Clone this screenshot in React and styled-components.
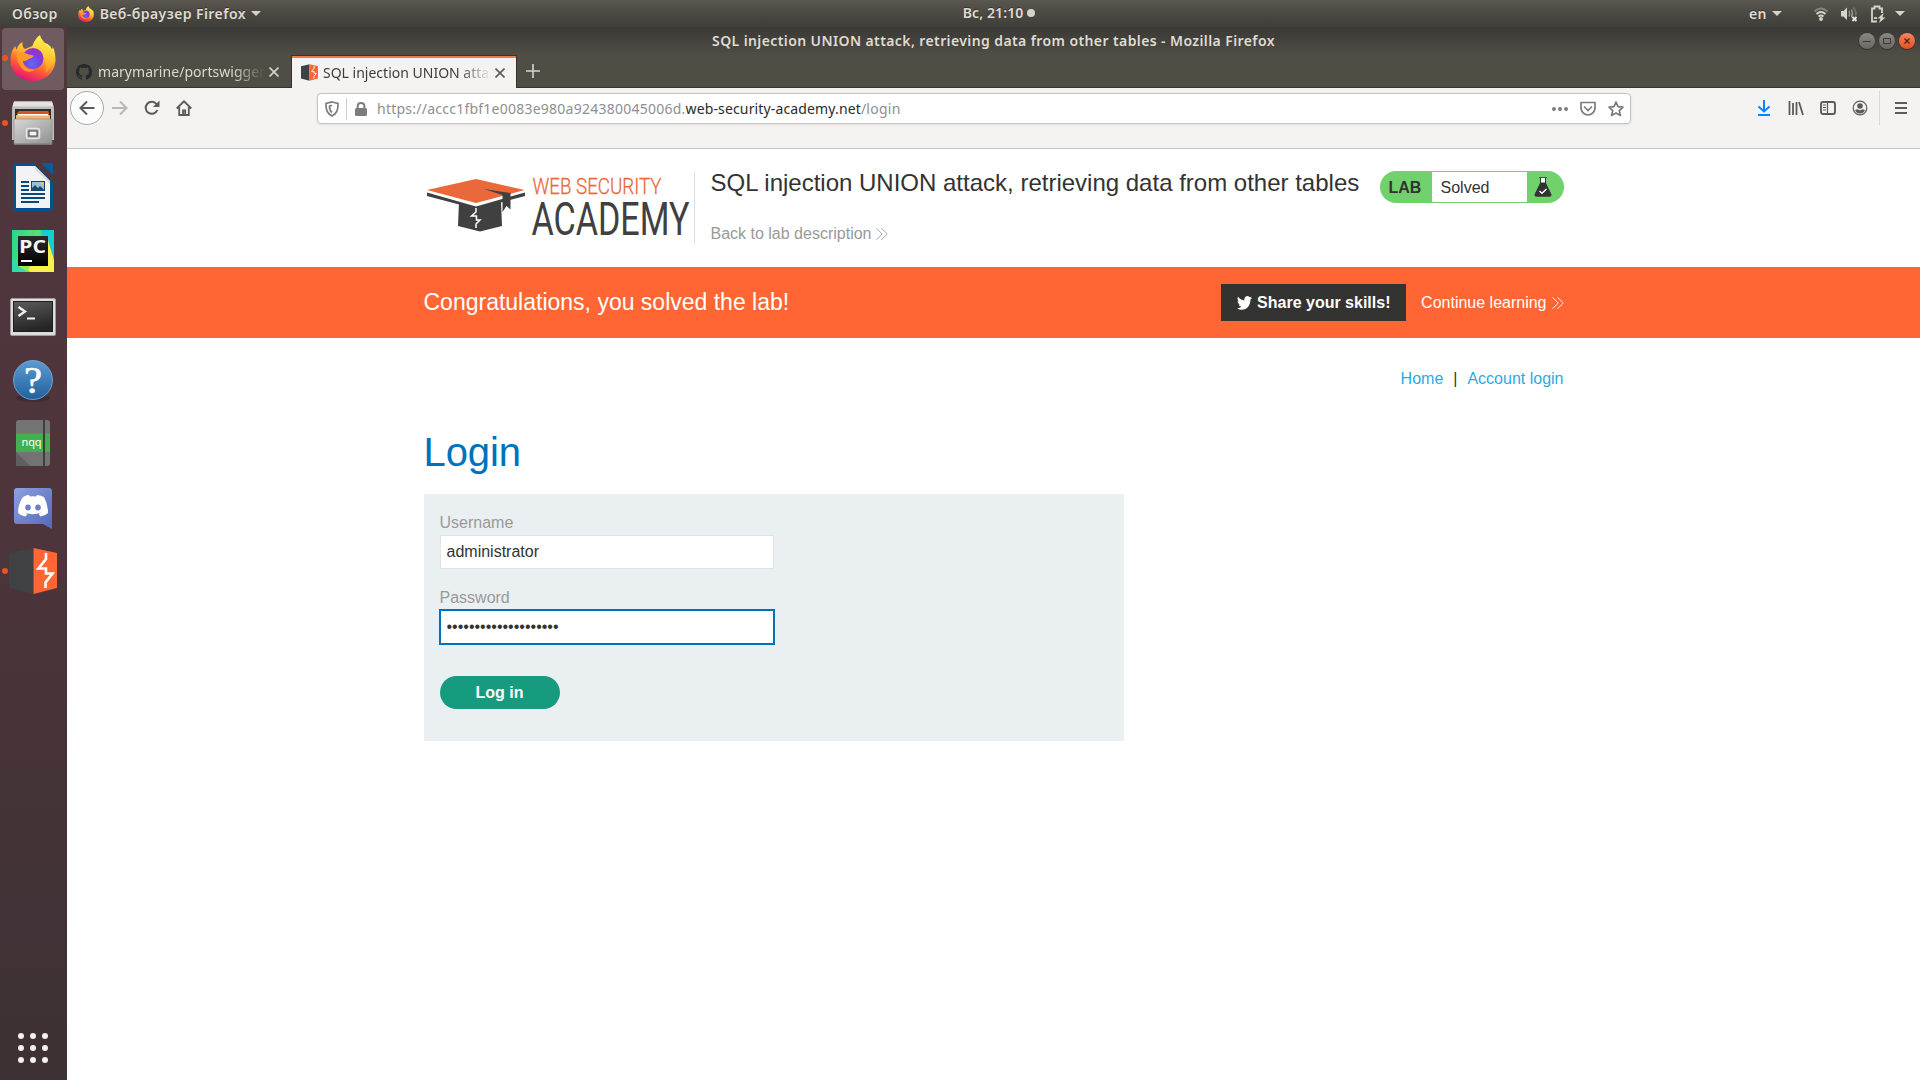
import React from "react";
import styled, { createGlobalStyle, css } from "styled-components";

const Global = createGlobalStyle`
  *, *::before, *::after { box-sizing: border-box; }
  html, body { margin: 0; padding: 0; overflow: hidden; }
  svg { display: block; flex: none; }
`;

const ui = css`font-family: "Noto Sans", "Open Sans", sans-serif;`;
const web = css`font-family: "Liberation Sans", Arial, sans-serif;`;

const Desktop = styled.div`
  display: flex;
  flex-direction: column;
  width: 1920px;
  height: 1080px;
  background: #fff;
  overflow: hidden;
`;

/* ---------- system panel ---------- */
const Panel = styled.header`
  ${ui}
  display: grid;
  grid-template-columns: 1fr auto 1fr;
  align-items: center;
  height: 27px;
  flex: none;
  color: #dfdbd2;
  background: linear-gradient(#5b574f, #4c4a43 45%, #3f3e39);
`;
const PanelSide = styled.div`
  display: flex;
  align-items: center;
  height: 27px;
  padding-left: ${(p) => p.$pl || 0}px;
  padding-right: ${(p) => p.$pr || 0}px;
  justify-content: ${(p) => (p.$end ? "flex-end" : "flex-start")};
`;
const PanelText = styled.span`
  font-size: 14px;
  font-weight: 600;
  line-height: 26px;
  white-space: nowrap;
  letter-spacing: ${(p) => p.$ls || 0}px;
  margin-right: ${(p) => p.$mr || 0}px;
  text-shadow: 0 -1px 0 rgba(0, 0, 0, 0.35);
`;
const Clock = styled.div`
  display: flex;
  align-items: center;
  gap: 4px;
  height: 27px;
  padding-bottom: 2px;
  margin-left: 78px;
`;
const ClockDot = styled.i`
  width: 8px;
  height: 8px;
  border-radius: 50%;
  background: #d6d3cc;
`;
const Caret = styled.i`
  width: 0;
  height: 0;
  border: 5px solid transparent;
  border-top-color: #d6d3cc;
  border-bottom: 0;
  margin-right: ${(p) => p.$mr || 0}px;
`;
const Gap = styled.span`
  width: ${(p) => p.$w}px;
  flex: none;
`;

/* ---------- dock ---------- */
const Body = styled.div`
  display: flex;
  flex: 1;
  min-height: 0;
`;
const Dock = styled.nav`
  display: flex;
  flex-direction: column;
  width: 67px;
  flex: none;
  background: linear-gradient(#50373d, #4d353b 45%, #403236 85%, #3d3133);
`;
const Slot = styled.div`
  display: flex;
  align-items: center;
  height: 64px;
  padding-left: 2px;
`;
const Tile = styled.div`
  display: flex;
  align-items: center;
  width: 62px;
  height: 62px;
  padding-top: ${(p) => p.$drop || 0}px;
  padding-bottom: ${(p) => p.$lift || 0}px;
  border-radius: 4px;
  background: ${(p) => (p.$active ? "#6f5b60" : "transparent")};
`;
const Dot = styled.i`
  width: 6px;
  height: 6px;
  flex: none;
  margin-right: ${(p) => p.$space}px;
  border-radius: 50%;
  background: ${(p) => (p.$on ? "#e95420" : "transparent")};
`;
const AppGrid = styled.div`
  display: grid;
  grid-template-columns: repeat(3, 6px);
  gap: 6px;
  margin: auto 0 17px 18px;
`;
const GridDot = styled.i`
  height: 6px;
  border-radius: 50%;
  background: #f3f1ef;
`;

/* ---------- browser chrome ---------- */
const Browser = styled.main`
  display: flex;
  flex-direction: column;
  flex: 1;
  min-width: 0;
`;
const TitleBar = styled.div`
  ${ui}
  display: grid;
  grid-template-columns: 1fr auto 1fr;
  align-items: center;
  height: 28px;
  color: #dfdbd2;
  background: linear-gradient(#3b3a36, #403f3a 35%, #504d45);
`;
const TitleText = styled.div`
  font-size: 14px;
  font-weight: 600;
  line-height: 28px;
  letter-spacing: ${(p) => p.$ls}px;
  white-space: nowrap;
`;
const WindowButtons = styled.div`
  display: flex;
  justify-content: flex-end;
  gap: 4px;
  padding-right: 5px;
`;
const WindowButton = styled.button`
  display: grid;
  place-items: center;
  width: 16px;
  height: 16px;
  padding: 0;
  border: 0;
  border-radius: 50%;
  background: ${(p) =>
    p.$close ? "linear-gradient(#f58562, #e2501c)" : "linear-gradient(#8b8983, #686660)"};
  box-shadow: 0 0 0 0.5px #33322e, 0 1px 0 #34332f;
`;
const TabStrip = styled.div`
  ${ui}
  display: flex;
  height: 33px;
  background: #504d45;
  box-shadow: inset 0 -1px 0 #35332e;
`;
const Tab = styled.div`
  display: flex;
  align-items: center;
  width: ${(p) => p.$w}px;
  height: 33px;
  padding: ${(p) => (p.$active ? "1px 11px 0 9px" : "0 12px 0 9px")};
  color: ${(p) => (p.$active ? "#3d3d3d" : "#dcd8cf")};
  ${(p) =>
    p.$active &&
    css`
      background: linear-gradient(#f07746, #f07746) 0 0 / 100% 2px no-repeat, #f4f3f2;
      border: 1px solid #35332e;
      border-width: 1px 1px 0 1px;
    `}
`;
const TabLabel = styled.span`
  flex: 1;
  margin: 0 4px 0 ${(p) => p.$ml}px;
  overflow: hidden;
  font-size: 14px;
  line-height: 22px;
  letter-spacing: ${(p) => p.$ls}px;
  white-space: nowrap;
  mask-image: linear-gradient(to left, transparent 0, #000 32px);
`;
const NewTab = styled.div`
  display: grid;
  place-items: center;
  width: 32px;
  height: 32px;
`;
const NavBar = styled.div`
  display: flex;
  align-items: flex-start;
  height: 61px;
  padding: 3px 3px 0 3px;
  background: #f4f3f2;
  border-bottom: 1px solid #c5c3c0;
`;
const NavIcon = styled.span`
  display: grid;
  place-items: center;
  width: 32px;
  height: 34px;
`;
const BackButton = styled.span`
  display: grid;
  place-items: center;
  width: 34px;
  height: 34px;
  border: 1px solid #a9a8a6;
  border-radius: 50%;
  background: #fcfcfc;
`;
const UrlBar = styled.div`
  ${ui}
  display: flex;
  align-items: center;
  width: 1314px;
  height: 31px;
  margin: 2px 0 0 117px;
  padding: 0 6px 0 6px;
  border: 1px solid #c4c3c1;
  border-radius: 4px;
  background: #fff;
  box-shadow: 0 1px 3px rgba(0, 0, 0, 0.08);
`;
const UrlSeparator = styled.i`
  width: 1px;
  height: 22px;
  margin: 0 6px;
  background: #cfcfcf;
`;
const UrlText = styled.div`
  flex: 1;
  margin-left: 8px;
  font-size: 14px;
  letter-spacing: 0.24px;
  line-height: 26px;
  white-space: nowrap;
  color: #8f8f8f;
`;
const UrlHost = styled.span`
  letter-spacing: 0.14px;
  color: #2b2b2b;
`;
const UrlActions = styled.div`
  display: flex;
  align-items: center;
  gap: 12px;
`;
const ToolGroup = styled.div`
  display: flex;
  align-items: center;
  margin-left: auto;
`;
const ToolSeparator = styled.i`
  width: 1px;
  height: 34px;
  margin: 0 5px 0 3px;
  background: #d9d8d6;
`;

/* ---------- page ---------- */
const Page = styled.section`
  ${web}
  flex: 1;
  color: #333332;
  background: #fff;
  font-size: 16px;
`;
const Container = styled.div`
  display: flex;
  width: 1140px;
  margin-left: 356.5px;
`;
const LabHeader = styled(Container)`
  height: 118px;
  padding-top: 22px;
`;
const LogoBox = styled.div`
  width: 271px;
  height: 73px;
  border-right: 1px solid #dedede;
`;
const LabInfo = styled.div`
  flex: 1;
  padding-left: 16px;
`;
const LabTitle = styled.h2`
  margin: 0;
  font-size: 24px;
  font-weight: 400;
  line-height: 23px;
  white-space: nowrap;
`;
const BackLink = styled.a`
  display: flex;
  align-items: center;
  gap: 5px;
  margin-top: 31px;
  line-height: 18px;
  color: #999;
`;
const LabBadge = styled.div`
  display: flex;
  align-items: center;
  width: 184px;
  height: 32px;
  padding: 1px 0;
  border-radius: 16px;
  background: #71d16d;
`;
const BadgeName = styled.b`
  width: 52px;
  padding: 2px 0 0 9px;
  line-height: 34px;
`;
const BadgeStatus = styled.span`
  width: 95px;
  height: 30px;
  margin-right: 7px;
  padding-left: 9px;
  line-height: 31px;
  background: #fff;
`;
const Banner = styled.div`
  height: 71px;
  background: #ff6633;
  color: #fff;
`;
const BannerRow = styled(Container)`
  align-items: center;
  height: 71px;
`;
const BannerText = styled.h4`
  flex: 1;
  margin: 0;
  padding-bottom: 2px;
  font-size: 23px;
  font-weight: 400;
  line-height: 30px;
`;
const ShareButton = styled.button`
  ${web}
  display: flex;
  align-items: center;
  gap: 5px;
  width: 185px;
  height: 37px;
  padding: 0 0 0 16px;
  margin-right: 15px;
  border: 0;
  background: #333332;
  color: #fff;
  font-size: 16px;
  font-weight: 700;
  white-space: nowrap;
`;
const ContinueLink = styled.a`
  display: flex;
  align-items: center;
  gap: 5px;
  white-space: nowrap;
`;
const AccountNav = styled(Container)`
  justify-content: flex-end;
  gap: 10px;
  height: 91px;
  padding-top: 31px;
  line-height: 19px;
`;
const NavLink = styled.a`
  color: #29abe2;
`;
const Heading = styled.h1`
  margin: 0 0 18px 356.5px;
  font-size: 40px;
  font-weight: 400;
  line-height: 47px;
  letter-spacing: -0.1px;
  color: #0071bd;
`;
const Form = styled.form`
  display: flex;
  flex-direction: column;
  align-items: flex-start;
  width: 700px;
  height: 247px;
  margin-left: 356.5px;
  padding: 19px 16px 0;
  background: #eaeff2;
`;
const Label = styled.label`
  line-height: 20px;
  margin-bottom: 2px;
  color: #999;
`;
const Field = styled.input`
  ${web}
  width: 334px;
  height: 34px;
  margin: 0 0 19px;
  padding: 0 6px;
  border: 1px solid #e3e3e3;
  border-radius: 0;
  background: #fff;
  color: #333332;
  font-size: 16px;
  outline: ${(p) => (p.$focused ? "2px solid #0071bd" : "none")};
  outline-offset: -1px;
`;
const LoginButton = styled.button`
  ${web}
  width: 120px;
  height: 33px;
  margin-top: 13px;
  padding: 0;
  border: 0;
  border-radius: 17px;
  background: #179b7f;
  color: #fff;
  font-size: 16px;
  font-weight: 700;
`;

/* ---------- drawings ---------- */
const FirefoxIcon = ({ size, id }) => (
  <svg width={size} height={size} viewBox="0 0 46 46">
    <defs>
      <linearGradient id={id + "a"} x1="0.75" y1="0.05" x2="0.3" y2="1">
        <stop offset="0" stopColor="#fff44f" />
        <stop offset="0.35" stopColor="#ffb02c" />
        <stop offset="0.65" stopColor="#ff5a36" />
        <stop offset="1" stopColor="#e5097f" />
      </linearGradient>
      <radialGradient id={id + "b"} cx="0.45" cy="0.75" r="0.8">
        <stop offset="0" stopColor="#5b6df8" />
        <stop offset="0.5" stopColor="#7a3fe0" />
        <stop offset="1" stopColor="#a12fc0" />
      </radialGradient>
      <linearGradient id={id + "c"} x1="0.6" y1="0" x2="0.5" y2="1">
        <stop offset="0" stopColor="#fff552" />
        <stop offset="0.6" stopColor="#ffc52e" />
        <stop offset="1" stopColor="#ff8a2a" />
      </linearGradient>
    </defs>
    <path
      fill={`url(#${id}a)`}
      d="M23 46C10 46 0.5 37 0.5 25C0.5 18 3 13.500 5.500 11C5.700 13 6 14 6.500 14.500C7.500 11 10 8.500 12.500 7C12 10 13 13 15 14L30 8C37 7 41 11 41.500 15C43 13 43 12 42.500 11C44.500 15 45.500 20 45.500 25C45 37 36 46 23 46Z"
    />
    <path
      fill={`url(#${id}c)`}
      d="M30 0C31 5 36 8 39.500 14C40.500 12.500 40 10.500 40 10.500C46 20 44 32 35 38C38 32 35 20 30 14.500C27 12 23 12.500 22.500 12.500C22.500 7.500 27 2 30 0Z"
    />
    <circle cx="23" cy="23.500" r="10.500" fill={`url(#${id}b)`} />
    <path
      fill="#ff9a2a"
      d="M6.500 20C10 16.500 16 18 18.500 19.500L23.500 20.500C23.500 22.500 21 23 18.500 24C16 26.500 14 26 13 26C13 32 19 36 25 34C20 40 8 36 6.500 20Z"
    />
  </svg>
);
const FilesIcon = () => (
  <svg width="46" height="46" viewBox="0 0 46 46">
    <defs>
      <linearGradient id="fl" x1="0" y1="0" x2="1" y2="1">
        <stop offset="0" stopColor="#d8d8d8" />
        <stop offset="1" stopColor="#8f8f8f" />
      </linearGradient>
    </defs>
    <path fill="#bdbdbd" d="M4 1.500H42L44 8V40H2V8Z" />
    <path fill="#e2e2e2" d="M4 1.500H42L43.500 6.500H2.500Z" />
    <path fill="#2e2b29" d="M5 9H41V20H5Z" />
    <path fill="#d9531e" d="M7 13L9 11H38L39 13V20H7Z" />
    <path fill="#f3b46c" d="M6 15H40V20H6Z" />
    <path fill="#fff" d="M8 14H38V15.500H8Z" />
    <path fill="url(#fl)" stroke="#858585" strokeWidth="0.600" d="M4 19H42V44.500H4Z" />
    <path fill="#777" d="M4 43.500H42V45H4Z" />
    <rect x="16.500" y="28.500" width="13" height="10" rx="2" fill="#aaa" stroke="#e6e6e6" strokeWidth="1.500" />
    <rect x="19" y="31" width="8" height="5" fill="#f4f4f4" stroke="#444" />
  </svg>
);
const WriterIcon = () => (
  <svg width="46" height="50" viewBox="0 0 46 50">
    <path fill="#04518e" d="M5.500 1H23L43 20V46Q43 49 40 49H6Q3 49 3 46V4Q3 1 5.500 1Z" />
    <path fill="#0a5c9b" d="M31 1H43V13Z" />
    <path fill="#f3f3f3" d="M6 4H25L40 19V46H6Z" />
    <path fill="#d9d9d9" d="M25 4L40 19V22L25 7Z" />
    <g fill="#064a7d">
      <path d="M11 19H19V21H11ZM11 23H19V25H11ZM11 27H19V29H11ZM11 31H35V33H11ZM11 35H35V37H11ZM11 39H29V41H11Z" />
    </g>
    <rect x="21.500" y="19.500" width="13" height="9" fill="#8fc2e6" stroke="#064a7d" />
    <path fill="#29455c" d="M22 28.500V26L25 23L28 26L30 24L34.500 28V28.500Z" />
    <circle cx="32" cy="21.500" r="1.500" fill="#f4c63d" />
  </svg>
);
const PyCharmIcon = () => (
  <svg width="46" height="46" viewBox="0 0 46 46">
    <defs>
      <linearGradient id="pcg" x1="0" y1="0" x2="1" y2="0.300">
        <stop offset="0" stopColor="#22d88f" />
        <stop offset="0.600" stopColor="#5fe06c" />
        <stop offset="0.750" stopColor="#18c8c8" />
        <stop offset="1" stopColor="#0fbff0" />
      </linearGradient>
      <linearGradient id="pcb" x1="0" y1="0" x2="0" y2="1">
        <stop offset="0" stopColor="#2a2a2a" />
        <stop offset="1" stopColor="#000" />
      </linearGradient>
    </defs>
    <path fill="url(#pcg)" d="M2 2H44V44H2Z" />
    <path fill="#14cfd0" d="M30 2H44V30L38 12Z" />
    <path fill="#f7f24a" d="M38 12L44 32V44H20L10 34Z" />
    <path fill="#35d9b0" d="M2 30L10 38L18 44H2Z" />
    <path fill="#9bea55" d="M8 38L20 38L18 44Z" />
    <path fill="url(#pcb)" d="M8 8H38V38H8Z" />
    <text x="9" y="24.500" fill="#f5f5f5" fontFamily="'Open Sans', sans-serif" fontWeight="700" fontSize="18.500" textLength="27" lengthAdjust="spacingAndGlyphs">PC</text>
    <path fill="#fff" d="M11 32H22V34H11Z" />
  </svg>
);
const TerminalIcon = () => (
  <svg width="48" height="40" viewBox="0 0 48 40">
    <defs>
      <linearGradient id="tg" x1="0" y1="0" x2="0.300" y2="1">
        <stop offset="0" stopColor="#5c5c5c" />
        <stop offset="1" stopColor="#262626" />
      </linearGradient>
    </defs>
    <rect x="1.500" y="1.500" width="45" height="37" rx="1.500" fill="#dcdcdc" stroke="#9d9d9d" />
    <rect x="4.500" y="4.500" width="39" height="30" fill="url(#tg)" stroke="#1d1d1d" />
    <path fill="none" stroke="#f2f2f2" strokeWidth="2.300" d="M9.500 10L16 14.500L9.500 19" />
    <path fill="#f2f2f2" d="M18 20.500H26V22.500H18Z" />
  </svg>
);
const HelpIcon = () => (
  <svg width="46" height="46" viewBox="0 0 46 46">
    <defs>
      <linearGradient id="hg" x1="0" y1="0" x2="0" y2="1">
        <stop offset="0" stopColor="#5d9bd0" />
        <stop offset="1" stopColor="#1f619f" />
      </linearGradient>
    </defs>
    <ellipse cx="23" cy="41" rx="17" ry="4" fill="#2d2327" opacity="0.500" />
    <circle cx="23" cy="23" r="19.500" fill="url(#hg)" stroke="#7db2dc" strokeWidth="0.800" />
    <text x="23" y="36" textAnchor="middle" fill="#fff" fontFamily="'Liberation Serif', serif" fontWeight="400" stroke="#fff" strokeWidth="0.600" fontSize="38" textLength="18" lengthAdjust="spacingAndGlyphs">?</text>
  </svg>
);
const NotesIcon = () => (
  <svg width="46" height="46" viewBox="0 0 46 46">
    <rect x="6" y="0" width="34" height="46" rx="3" fill="#737373" />
    <path fill="#5f5f5f" d="M6 32L20 46H6Z" />
    <path fill="#44b04d" d="M6 13.500H40V32H6Z" />
    <path fill="#3d3d3d" d="M33 0H35V46H33Z" />
    <text x="11.500" y="26" fill="#fff" fontFamily="'Noto Sans', sans-serif" fontSize="11" textLength="20">nqq</text>
  </svg>
);
const DiscordIcon = () => (
  <svg width="46" height="46" viewBox="0 0 46 46">
    <defs>
      <linearGradient id="dg" x1="0" y1="0" x2="1" y2="1">
        <stop offset="0" stopColor="#8ea0de" />
        <stop offset="1" stopColor="#5268bd" />
      </linearGradient>
    </defs>
    <path fill="url(#dg)" d="M7 3H39Q42 3 42 6V44L33 39H7Q4 39 4 36V6Q4 3 7 3Z" />
    <path
      fill="#fff"
      d="M13 12Q16 10 19 10L20 11.500Q23 11 26 11.500L27 10Q31 10.500 34 12Q38 19 38 28Q35 31 30.500 31.500L28.500 29L31 27.500Q23 31 15 27.500L17.500 29L15.500 31.500Q11 31 8 28Q8 19 13 12Z"
    />
    <ellipse cx="18" cy="22.500" rx="2.800" ry="3" fill="#6d80cc" />
    <ellipse cx="28" cy="22.500" rx="2.800" ry="3" fill="#6d80cc" />
  </svg>
);
const BurpIcon = ({ size }) => (
  <svg width={size} height={size} viewBox="0 0 48 48">
    <path fill="#404142" d="M0 6L24 1V47L0 41Z" />
    <path fill="#ff6633" d="M24.500 1L48 6V41L24.500 47Z" />
    <path
      fill="none"
      stroke="#fff"
      strokeWidth="2.600"
      d="M37 6V12L29.500 21.500H37V26.500H43.500L36.500 35.500V41"
    />
  </svg>
);
const GithubIcon = () => (
  <svg width="16" height="16" viewBox="0 0 16 16" fill="#24292f">
    <path d="M8 0C3.580 0 0 3.580 0 8c0 3.540 2.290 6.530 5.470 7.590.4.070.55-.17.55-.38 0-.19-.01-.82-.01-1.490-2.010.37-2.530-.49-2.690-.94-.09-.23-.48-.94-.82-1.130-.28-.15-.68-.52-.01-.53.63-.01 1.080.58 1.230.82.72 1.210 1.870.87 2.330.66.07-.52.28-.87.51-1.070-1.780-.2-3.640-.89-3.640-3.950 0-.87.31-1.590.82-2.150-.08-.2-.36-1.020.08-2.120 0 0 .67-.21 2.200.82.64-.18 1.320-.27 2-.27s1.360.09 2 .27c1.530-1.040 2.200-.82 2.200-.82.44 1.100.16 1.920.08 2.120.51.56.82 1.270.82 2.150 0 3.070-1.870 3.750-3.650 3.950.29.25.54.73.54 1.480 0 1.070-.01 1.930-.01 2.200 0 .21.15.46.55.38A8.010 8.010 0 0 0 16 8c0-4.420-3.580-8-8-8z" />
  </svg>
);
const Line = ({ size = 16, color = "#5b5b5c", w = 2, children, vb = 16 }) => (
  <svg width={size} height={size} viewBox={`0 0 ${vb} ${vb}`} fill="none" stroke={color} strokeWidth={w}>
    {children}
  </svg>
);
const CloseX = ({ color }) => (
  <Line size={10} vb={10} color={color} w={1.6}>
    <path d="M0.500 0.500L9.500 9.500M9.500 0.500L0.500 9.500" />
  </Line>
);
const Chevrons = ({ color }) => (
  <svg width="12" height="12" viewBox="0 0 12 12" fill="none" stroke={color} strokeWidth="0.900">
    <path d="M0.500 0.200L6.200 6L0.500 11.800M5.500 0.200L11.200 6L5.500 11.800" />
  </svg>
);
const AcademyLogo = () => (
  <svg width="270" height="73" viewBox="0 0 270 73">
    <path fill="#404040" d="M35 30.500L56.500 35L77 30.500L78 55L56 60.500L34 55Z" />
    <path fill="#404040" d="M3 20.500L52 33.500L101 20.500V25L52 38L3 25Z" />
    <path fill="#fff" d="M3 19L52 32.500L101 19L101 21.500L52 35.500L3 21.500Z" />
    <path fill="#ea6839" d="M3 19L52 8L100.500 19L52 32Z" />
    <path fill="#404040" d="M60 18L86.500 22V38.500L82.500 35L78.500 41V24Z" />
    <path fill="none" stroke="#fff" strokeWidth="1.500" d="M52 37V41L47.500 45H52.500V49H56L52 53V57" />
    <g fontFamily="Roboto, sans-serif" strokeLinejoin="round">
      <text x="108.500" y="23" fontWeight="300" fontSize="22.500" fill="#ea6839" stroke="#ea6839" strokeWidth="0.300" textLength="129" lengthAdjust="spacingAndGlyphs">WEB SECURITY</text>
      <text x="107.500" y="63.500" fontWeight="400" fontSize="45.500" fill="#404040" textLength="158" lengthAdjust="spacingAndGlyphs">ACADEMY</text>
    </g>
  </svg>
);
const FlaskIcon = () => (
  <svg width="18" height="20" viewBox="0 0 18 20">
    <path fill="#333332" d="M5 0.300H13V1H12V6L17.500 17.500Q17.800 19.500 16 19.700H2Q0.200 19.500 0.500 17.500L6 6V1H5Z" />
    <path fill="#fff" d="M7 1H11V5.500H7Z" />
    <path fill="none" stroke="#fff" strokeWidth="1.300" d="M5.500 14L8 16.300L12.500 12" />
  </svg>
);
const TwitterIcon = () => (
  <svg width="15" height="14" viewBox="0 2 24 20" preserveAspectRatio="none" fill="#fff">
    <path d="M24 4.560c-.88.390-1.830.650-2.830.770 1.020-.61 1.800-1.570 2.160-2.720-.95.560-2 .970-3.120 1.190A4.920 4.920 0 0 0 11.800 8.290C7.700 8.090 4.100 6.130 1.670 3.150a4.920 4.920 0 0 0 1.520 6.570 4.900 4.900 0 0 1-2.230-.62c-.05 2.280 1.580 4.420 3.950 4.890-.69.190-1.450.230-2.220.080a4.920 4.920 0 0 0 4.600 3.420A9.900 9.900 0 0 1 0 19.540a13.940 13.940 0 0 0 7.550 2.210c9.140 0 14.310-7.720 13.990-14.640A10 10 0 0 0 24 4.560z" />
  </svg>
);

const dockApps = [
  { key: "firefox", icon: <FirefoxIcon size={46} id="ffd" />, on: true, active: true, lift: 2 },
  { key: "files", icon: <FilesIcon />, on: true },
  { key: "writer", icon: <WriterIcon /> },
  { key: "pycharm", icon: <PyCharmIcon /> },
  { key: "terminal", icon: <TerminalIcon />, drop: 3, space: 1 },
  { key: "help", icon: <HelpIcon />, drop: 2 },
  { key: "notes", icon: <NotesIcon /> },
  { key: "discord", icon: <DiscordIcon />, drop: 2 },
  { key: "burp", icon: <BurpIcon size={48} />, on: true, space: 1 },
];

export default function App() {
  return (
    <Desktop>
      <Global />
      <Panel>
        <PanelSide $pl={12}>
          <PanelText $ls={0.38} $mr={20}>Обзор</PanelText>
          <FirefoxIcon size={16} id="ffp" />
          <Gap $w={6} />
          <PanelText $ls={0.46} $mr={5}>Веб-браузер Firefox</PanelText>
          <Caret />
        </PanelSide>
        <Clock>
          <PanelText $ls={0.1}>Вс, 21:10</PanelText>
          <ClockDot />
        </Clock>
        <PanelSide $end $pr={15}>
          <PanelText $ls={0.5} $mr={5}>en</PanelText>
          <Caret $mr={31} />
          <svg width="16" height="16" viewBox="0 0 16 16" fill="none" stroke="#d6d3cc" strokeWidth="1.800">
            <path stroke="#85827b" d="M1.500 5.500Q8 -0.500 14.500 5.500" />
            <path d="M3.500 8Q8 4 12.500 8M5.500 10.500Q8 8.500 10.500 10.500" />
            <circle cx="8" cy="13" r="1" fill="#d6d3cc" />
          </svg>
          <Gap $w={11} />
          <svg width="18" height="16" viewBox="0 0 18 16" fill="none" strokeWidth="1.500">
            <path fill="#d6d3cc" d="M1 5H3.500L7 1.500V14L3.500 10.500H1Z" />
            <path stroke="#98958e" d="M9 5Q10.500 8 9 10.500M11.500 3.500Q13.500 7.500 11.500 11.500" />
            <path stroke="#77746d" d="M13.500 1.500Q17 6 15.500 9.500" />
            <path stroke="#e8e5df" strokeWidth="1.800" d="M12.500 11L16.500 15M16.500 11L12.500 15" />
          </svg>
          <Gap $w={12} />
          <svg width="16" height="18" viewBox="0 0 16 18" fill="none" stroke="#d6d3cc" strokeWidth="1.800">
            <path d="M7 16.500H2V3.500H4.500V1.500H9.500V3.500H12V8" />
            <path d="M4 13H7" />
            <path fill="#d6d3cc" stroke="none" d="M13.500 8L7.500 13.500H10.500L9 18L15.500 12.500H12.500Z" />
          </svg>
          <Gap $w={9} />
          <Caret />
        </PanelSide>
      </Panel>
      <Body>
        <Dock>
          {dockApps.map((a) => (
            <Slot key={a.key}>
              <Tile $active={a.active} $drop={a.drop} $lift={a.lift}>
                <Dot $on={a.on} $space={a.space ?? 2} />
                {a.icon}
              </Tile>
            </Slot>
          ))}
          <AppGrid>
            {Array.from({ length: 9 }, (_, i) => (
              <GridDot key={i} />
            ))}
          </AppGrid>
        </Dock>
        <Browser>
          <TitleBar>
            <span />
            <TitleText $ls={0.4}>SQL injection UNION attack, retrieving data from other tables - Mozilla Firefox</TitleText>
            <WindowButtons>
              <WindowButton>
                <Line size={10} vb={10} color="#3b3a36" w={1}><path d="M1 5.500H9" /></Line>
              </WindowButton>
              <WindowButton>
                <Line size={10} vb={10} color="#3b3a36" w={1}><path d="M1.500 2.500H8.500V7.500H1.500Z" /></Line>
              </WindowButton>
              <WindowButton $close>
                <Line size={10} vb={10} color="#4a2115" w={1.2}><path d="M2.500 2.500L7.500 7.500M7.500 2.500L2.500 7.500" /></Line>
              </WindowButton>
            </WindowButtons>
          </TitleBar>
          <TabStrip>
            <Tab $w={224}>
              <GithubIcon />
              <TabLabel $ls={0.04} $ml={6}>marymarine/portswigger-labs</TabLabel>
              <CloseX color="#d6d3cc" />
            </Tab>
            <Tab $active $w={226}>
              <BurpIcon size={17} />
              <TabLabel $ls={0} $ml={5}>SQL injection UNION attack, retrieving</TabLabel>
              <CloseX color="#5b5b5c" />
            </Tab>
            <NewTab>
              <Line size={14} vb={14} color="#d6d3cc" w={1.6}><path d="M7 0V14M0 7H14" /></Line>
            </NewTab>
          </TabStrip>
          <NavBar>
            <BackButton>
              <Line><path d="M15.500 8H1.500M8 1.500L1.500 8L8 14.500" /></Line>
            </BackButton>
            <NavIcon>
              <Line color="#b9b8b7"><path d="M0 8H14.500M8 1.500L14.500 8L8 14.500" /></Line>
            </NavIcon>
            <NavIcon>
              <Line><path d="M13.300 10A6 6 0 1 1 12.500 4.200" /><path fill="#5b5b5c" stroke="none" d="M15.500 0.500V7H9Z" /></Line>
            </NavIcon>
            <NavIcon>
              <Line w={1.8}><path d="M0.700 8.500L8 1.300L15.300 8.500M3.200 7V15H12.800V7" /><path d="M7 15V10.500H9.200V15" /></Line>
            </NavIcon>
            <UrlBar>
              <Line color="#7c7c7c" w={1.7}><path d="M8 1L14 2.500Q14.500 12 8 15Q1.500 12 2 2.500Z" /><path d="M8 4.500Q5.500 4.500 5.500 5.500Q5.500 9.500 8 11.500" /></Line>
              <UrlSeparator />
              <svg width="16" height="16" viewBox="0 0 16 16">
                <path fill="#7c7c7c" d="M3.500 7H12.500Q14 7 14 8.500V14Q14 15 12.500 15H3.500Q2 15 2 14V8.500Q2 7 3.500 7Z" />
                <path fill="none" stroke="#7c7c7c" strokeWidth="2" d="M4.700 8V4.500Q5 2 8 2Q11 2 11.300 4.500V8" />
              </svg>
              <UrlText>
                https://accc1fbf1e0083e980a924380045006d.<UrlHost>web-security-academy.net</UrlHost>/login
              </UrlText>
              <UrlActions>
                <svg width="16" height="16" viewBox="0 0 16 16" fill="#7c7c7c">
                  <circle cx="2" cy="8" r="2" /><circle cx="8" cy="8" r="2" /><circle cx="14" cy="8" r="2" />
                </svg>
                <Line color="#7c7c7c" w={1.7}><path strokeLinejoin="round" d="M1 1.500H15V7A7 7 0 0 1 1 7Z" /><path strokeLinecap="round" d="M4.500 6L8 9.500L11.500 6" /></Line>
                <Line color="#7c7c7c" w={1.7}><path strokeLinejoin="round" d="M8 1L10 5.600L15 6.100L11.300 9.500L12.400 14.500L8 12L3.600 14.500L4.700 9.500L1 6.100L6 5.600Z" /></Line>
              </UrlActions>
            </UrlBar>
            <ToolGroup>
              <NavIcon>
                <Line color="#0a84ff"><path d="M8 0V11M2.500 6.500L8 11.500L13.500 6.500M2 15H14" /></Line>
              </NavIcon>
              <NavIcon>
                <Line w={1.8}><path d="M1.500 1V15M5 3V15M8.500 2V15M11 2L15 15" /></Line>
              </NavIcon>
              <NavIcon>
                <Line w={1.9}><rect x="1" y="2" width="14" height="12" rx="2" /><path strokeWidth="1.200" d="M7.500 2V14M3 5H6M3 7.500H6M3 10H6" /></Line>
              </NavIcon>
              <NavIcon>
                <Line w={1.2}><circle cx="8" cy="8" r="6.800" /><circle cx="8" cy="6" r="2.800" fill="#5b5b5c" stroke="none" /><path fill="#5b5b5c" stroke="none" d="M3 10Q5 9 6 9.500Q8 10.800 10 9.500Q11 9 13 10Q11.500 13.500 8 13.500Q4.500 13.500 3 10Z" /></Line>
              </NavIcon>
              <ToolSeparator />
              <NavIcon>
                <Line><path d="M2 3H14M2 8H14M2 13H14" /></Line>
              </NavIcon>
            </ToolGroup>
          </NavBar>
          <Page>
            <LabHeader>
              <LogoBox><AcademyLogo /></LogoBox>
              <LabInfo>
                <LabTitle>SQL injection UNION attack, retrieving data from other tables</LabTitle>
                <BackLink>Back to lab description<Chevrons color="#999" /></BackLink>
              </LabInfo>
              <LabBadge>
                <BadgeName>LAB</BadgeName>
                <BadgeStatus>Solved</BadgeStatus>
                <FlaskIcon />
              </LabBadge>
            </LabHeader>
            <Banner>
              <BannerRow>
                <BannerText>Congratulations, you solved the lab!</BannerText>
                <ShareButton><TwitterIcon />Share your skills!</ShareButton>
                <ContinueLink>Continue learning<Chevrons color="#fff" /></ContinueLink>
              </BannerRow>
            </Banner>
            <AccountNav>
              <NavLink>Home</NavLink>
              <span>|</span>
              <NavLink>Account login</NavLink>
            </AccountNav>
            <Heading>Login</Heading>
            <Form>
              <Label>Username</Label>
              <Field type="text" defaultValue="administrator" />
              <Label>Password</Label>
              <Field type="password" $focused defaultValue="abcdefghijklmnopqrst" />
              <LoginButton type="button">Log in</LoginButton>
            </Form>
          </Page>
        </Browser>
      </Body>
    </Desktop>
  );
}
